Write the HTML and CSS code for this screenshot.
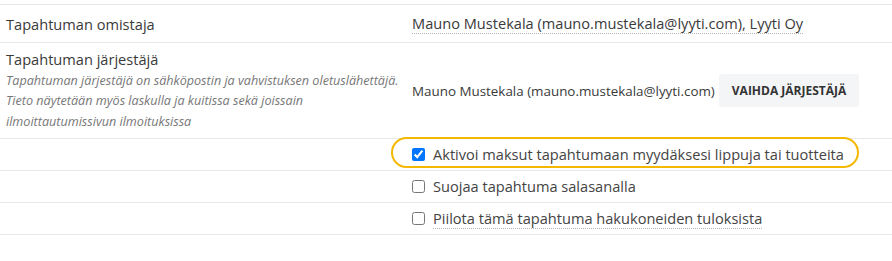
FILE: index.html
```html
<!DOCTYPE html>
<html lang="fi">
<head>
<meta charset="utf-8">
<link rel="stylesheet" href="styles.css">
</head>
<body>
<div class="settings">
  <div class="row row-owner">
    <div class="label-col">Tapahtuman omistaja</div>
    <div class="value-col"><span class="dotted">Mauno Mustekala (mauno.mustekala@lyyti.com), Lyyti Oy</span></div>
  </div>
  <div class="row row-organizer">
    <div class="label-col">
      <div class="title">Tapahtuman järjestäjä</div>
      <div class="desc">Tapahtuman järjestäjä on sähköpostin ja vahvistuksen oletuslähettäjä.<br>Tieto näytetään myös laskulla ja kuitissa sekä joissain<br>ilmoittautumissivun ilmoituksissa</div>
    </div>
    <div class="value-col value-center">
      <span class="organizer-name">Mauno Mustekala (mauno.mustekala@lyyti.com)</span>
      <button class="btn" type="button">VAIHDA JÄRJESTÄJÄ</button>
    </div>
  </div>
  <div class="row row-check">
    <div class="label-col"></div>
    <div class="value-col">
      <label class="check highlight"><input type="checkbox" checked><span>Aktivoi maksut tapahtumaan myydäksesi lippuja tai tuotteita</span></label>
    </div>
  </div>
  <div class="row row-check">
    <div class="label-col"></div>
    <div class="value-col">
      <label class="check"><input type="checkbox"><span>Suojaa tapahtuma salasanalla</span></label>
    </div>
  </div>
  <div class="row row-check">
    <div class="label-col"></div>
    <div class="value-col">
      <label class="check"><input type="checkbox"><span class="dotted">Piilota tämä tapahtuma hakukoneiden tuloksista</span></label>
    </div>
  </div>
</div>
</body>
</html>
```
FILE: styles.css
```css
html, body {
  margin: 0;
  padding: 0;
  background: #ffffff;
}

body {
  font-family: "Open Sans", "Noto Sans", sans-serif;
  font-size: 14.6px;
  color: #3a3a3a;
}

.settings {
  padding-top: 4px;
}

.row {
  display: grid;
  grid-template-columns: 412px 1fr;
  border-top: 1px solid #e8e8e8;
}

.row:last-child {
  border-bottom: 1px solid #e8e8e8;
}

.label-col {
  padding-left: 6px;
}

.row-owner {
  height: 37px;
  align-items: center;
}

.row-owner .value-col {
  padding-bottom: 1px;
}

.dotted {
  border-bottom: 1px dotted #b5b5b5;
}

.row-organizer {
  height: 95px;
}

.row-organizer .label-col {
  padding-top: 6px;
}

.title {
  line-height: 20px;
}

.desc {
  margin-top: 2px;
  font-size: 12.6px;
  line-height: 20.4px;
  font-style: italic;
  color: #777777;
  white-space: nowrap;
}

.value-center {
  display: flex;
  align-items: center;
  gap: 4px;
  white-space: nowrap;
}

.organizer-name {
  font-size: 13.4px;
}

.btn {
  font-family: inherit;
  font-size: 12px;
  font-weight: 700;
  color: #333333;
  background: #f4f5f7;
  border: none;
  border-radius: 2px;
  height: 33px;
  padding: 0 13px;
  white-space: nowrap;
}

.row-check {
  height: 31px;
  align-items: center;
}

.check {
  display: inline-flex;
  align-items: center;
  gap: 8px;
  position: relative;
  color: #444444;
}

.check input {
  margin: 0;
  width: 13px;
  height: 13px;
}

.highlight::before {
  content: "";
  position: absolute;
  left: -21px;
  right: -15px;
  top: -7px;
  bottom: -4px;
  border: 2px solid #f5b800;
  border-radius: 16px;
  pointer-events: none;
}
```
